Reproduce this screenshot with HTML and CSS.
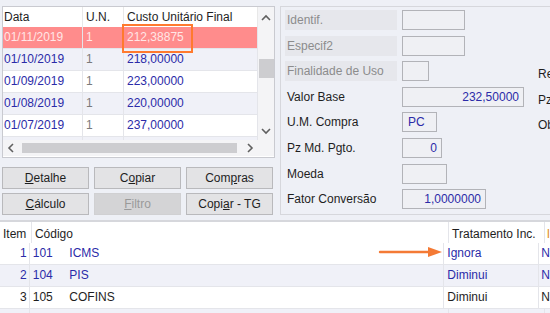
FILE: index.html
```html
<!DOCTYPE html>
<html lang="pt-BR">
<head>
    <meta charset="UTF-8">
    <title>Custos</title>
    <link rel="stylesheet" href="styles.css">
</head>
<body>
<div class="screen">
    <div class="top">
        <div class="left">
            <div class="grid-box">
                <div class="grid-main">
                    <div class="grid-body">
                        <div class="row head">
                            <span class="c-data">Data</span>
                            <span class="c-un">U.N.</span>
                            <span class="c-custo">Custo Unitário Final</span>
                        </div>
                        <div class="row sel">
                            <span class="c-data">01/11/2019</span>
                            <span class="c-un">1</span>
                            <span class="c-custo">212,38875</span>
                        </div>
                        <div class="row alt">
                            <span class="c-data">01/10/2019</span>
                            <span class="c-un">1</span>
                            <span class="c-custo">218,00000</span>
                        </div>
                        <div class="row">
                            <span class="c-data">01/09/2019</span>
                            <span class="c-un">1</span>
                            <span class="c-custo">223,00000</span>
                        </div>
                        <div class="row alt">
                            <span class="c-data">01/08/2019</span>
                            <span class="c-un">1</span>
                            <span class="c-custo">220,00000</span>
                        </div>
                        <div class="row">
                            <span class="c-data">01/07/2019</span>
                            <span class="c-un">1</span>
                            <span class="c-custo">237,00000</span>
                        </div>
                        <div class="row alt">
                            <span class="c-data"></span>
                            <span class="c-un"></span>
                            <span class="c-custo"></span>
                        </div>
                    </div>
                    <div class="vscroll">
                        <svg class="arrow-up" width="10" height="7" viewBox="0 0 10 7"><path d="M1 6 L5 2 L9 6" fill="none" stroke="#606060" stroke-width="1.6"/></svg>
                        <div class="vthumb"></div>
                        <svg class="arrow-down" width="10" height="7" viewBox="0 0 10 7"><path d="M1 1 L5 5 L9 1" fill="none" stroke="#606060" stroke-width="1.6"/></svg>
                    </div>
                </div>
                <div class="hscroll">
                    <svg width="7" height="10" viewBox="0 0 7 10"><path d="M6 1 L2 5 L6 9" fill="none" stroke="#606060" stroke-width="1.6"/></svg>
                    <div class="hthumb"></div>
                    <svg width="7" height="10" viewBox="0 0 7 10"><path d="M1 1 L5 5 L1 9" fill="none" stroke="#606060" stroke-width="1.6"/></svg>
                    <div class="corner"></div>
                </div>
            </div>
            <div class="buttons">
                <button><u>D</u>etalhe</button>
                <button>C<u>o</u>piar</button>
                <button>Com<u>p</u>ras</button>
                <button><u>C</u>álculo</button>
                <button class="disabled"><u>F</u>iltro</button>
                <button>Copi<u>a</u>r - TG</button>
            </div>
        </div>
        <div class="panel">
            <div class="fields">
                <span class="label off">Identif.</span>
                <span class="box w-63"></span>
                <span></span>

                <span class="label off">Especif2</span>
                <span class="box w-63"></span>
                <span></span>

                <span class="label off">Finalidade de Uso</span>
                <span class="box w-27"></span>
                <span class="side">Re</span>

                <span class="label">Valor Base</span>
                <span class="box w-122 num">232,50000</span>
                <span class="side">Pz</span>

                <span class="label">U.M. Compra</span>
                <span class="box w-35 txt">PC</span>
                <span class="side">Ob</span>

                <span class="label">Pz Md. Pgto.</span>
                <span class="box w-40 num">0</span>
                <span></span>

                <span class="label">Moeda</span>
                <span class="box w-45"></span>
                <span></span>

                <span class="label">Fator Conversão</span>
                <span class="box w-84 num">1,0000000</span>
                <span></span>
            </div>
        </div>
    </div>
    <div class="bottom">
        <div class="brow bhead">
            <span class="b-item">Item</span>
            <span class="b-cod">Código</span>
            <span class="b-desc"></span>
            <span class="b-trat">Tratamento Inc.</span>
            <span class="b-next orange">I</span>
        </div>
        <div class="brow blue">
            <span class="b-item">1</span>
            <span class="b-cod">101</span>
            <span class="b-desc">ICMS</span>
            <span class="b-trat">Ignora</span>
            <span class="b-next">N</span>
        </div>
        <div class="brow alt blue">
            <span class="b-item">2</span>
            <span class="b-cod">104</span>
            <span class="b-desc">PIS</span>
            <span class="b-trat">Diminui</span>
            <span class="b-next">N</span>
        </div>
        <div class="brow">
            <span class="b-item">3</span>
            <span class="b-cod">105</span>
            <span class="b-desc">COFINS</span>
            <span class="b-trat">Diminui</span>
            <span class="b-next">N</span>
        </div>
        <div class="brow alt">
            <span class="b-item"></span>
            <span class="b-cod"></span>
            <span class="b-desc"></span>
            <span class="b-trat"></span>
            <span class="b-next"></span>
        </div>
    </div>

    <div class="mark"></div>
    <svg class="pointer" width="70" height="14" viewBox="0 0 70 14">
        <path d="M2 7 L54 7" stroke="#f47a35" stroke-width="2.4" stroke-linecap="round"/>
        <path d="M50 2 L64 7 L50 12 Z" fill="#f47a35"/>
    </svg>
</div>
</body>
</html>
```

FILE: styles.css
```css
body {
    margin: 0;
    font-family: "Liberation Sans", Arial, sans-serif;
    font-size: 12px;
    color: #1e1e1e;
    background: #eef0f6;
}
.screen {
    position: relative;
    width: 550px;
    height: 313px;
    overflow: hidden;
}
.top {
    display: flex;
    padding-top: 6px;
    height: 209px;
}
.left {
    width: 273px;
    margin-left: 2px;
    flex-shrink: 0;
}

/* upper grid */
.grid-box {
    border: 1px solid #c9cad0;
    background: #ffffff;
    height: 150px;
    display: flex;
    flex-direction: column;
}
.grid-main {
    display: flex;
    height: 133px;
}
.grid-body {
    flex: 1;
    overflow: hidden;
}
.row {
    display: flex;
    height: 21px;
    line-height: 21px;
    border-bottom: 1px solid #e4e5ea;
    color: #2b2ba8;
}
.row span {
    padding-left: 1px;
    border-right: 1px solid #e4e5ea;
    white-space: nowrap;
}
.row.head {
    color: #1e1e1e;
    height: 20px;
    line-height: 20px;
    border-bottom: none;
}
.row.head span {
    border-right-color: #e8e8e8;
}
.row.alt {
    background: #f0f1f8;
}
.row.sel {
    background: #ff8c8c;
    color: #ffe6e6;
}
.c-data {
    width: 78px;
}
.c-un {
    width: 37px;
    padding-left: 3px !important;
    color: #7a7a7a;
}
.row.head .c-un {
    color: #1e1e1e;
}
.row.sel .c-un {
    color: #ffe6e6;
}
.c-custo {
    flex: 1;
    padding-left: 3px !important;
}
.vscroll {
    width: 16px;
    background: #f4f4f6;
    display: flex;
    flex-direction: column;
    align-items: center;
}
.arrow-up {
    margin-top: 7px;
}
.vthumb {
    width: 15px;
    height: 19px;
    background: #cdcdd0;
    margin-top: 38px;
}
.arrow-down {
    margin-top: auto;
    margin-bottom: 5px;
}
.hscroll {
    height: 16px;
    background: #f4f4f6;
    display: flex;
    align-items: center;
    padding-left: 4px;
}
.hthumb {
    width: 215px;
    height: 10px;
    background: #cdcdd0;
    margin: 0 10px 0 8px;
}
.corner {
    flex: 1;
}

/* buttons */
.buttons {
    display: grid;
    grid-template-columns: 87px 87px 87px;
    column-gap: 5px;
    row-gap: 4px;
    margin-top: 9px;
}
button {
    height: 22px;
    padding: 0;
    font-family: "Liberation Sans", Arial, sans-serif;
    font-size: 12px;
    color: #1e1e1e;
    background: #e3e3e5;
    border: 1px solid #b9b9bc;
}
button.disabled {
    background: #d4d4d6;
    border-color: #d0d0d2;
    color: #9a9a9a;
}

/* right panel */
.panel {
    flex: 1;
    margin-left: 5px;
    border: 1px solid #d6d7dc;
    border-right: none;
    padding: 3px 0 0 4px;
}
.fields {
    display: grid;
    grid-template-columns: 112px 131px 30px;
    column-gap: 5px;
    grid-auto-rows: 20px;
    row-gap: 5.6px;
}
.label {
    line-height: 20px;
    padding-left: 2px;
    white-space: nowrap;
}
.label.off {
    background: #e6e7ec;
    color: #8c8c8c;
}
.box {
    box-sizing: border-box;
    height: 20px;
    line-height: 18px;
    border: 1px solid #b2b3b8;
    background: #eff0f4;
    color: #2b2ba8;
}
.box.num {
    text-align: right;
    padding-right: 4px;
}
.box.txt {
    padding-left: 5px;
}
.w-63 { width: 63px; }
.w-27 { width: 27px; }
.w-122 { width: 122px; }
.w-35 { width: 35px; }
.w-40 { width: 40px; }
.w-45 { width: 45px; }
.w-84 { width: 84px; }
.side {
    line-height: 20px;
    padding-top: 3px;
    white-space: nowrap;
}

/* lower grid */
.bottom {
    margin-top: 5px;
    border-top: 2px solid #d6d7dc;
    background: #ffffff;
    height: 100px;
}
.brow {
    display: flex;
    height: 21px;
    line-height: 21px;
    border-bottom: 1px solid #e4e5ea;
    white-space: nowrap;
}
.brow.bhead {
    height: 21px;
    line-height: 25px;
    border-bottom: none;
}
.brow.alt {
    background: #f0f1f8;
}
.brow.blue {
    color: #2b2ba8;
}
.b-item {
    width: 27px;
    text-align: right;
    padding-right: 2px;
    border-right: 1px solid #e4e5ea;
}
.bhead .b-item {
    text-align: left;
    padding-left: 3px;
    width: 26px;
}
.b-cod {
    width: 37px;
    padding-left: 3px;
}
.b-desc {
    width: 378px;
    border-right: 1px solid #e4e5ea;
}
.b-trat {
    width: 92px;
    padding-left: 3px;
    border-right: 1px solid #e4e5ea;
}
.b-next {
    padding-left: 2px;
    color: #2b2ba8;
}
.brow:not(.blue) .b-next {
    color: #1e1e1e;
}
.b-next.orange {
    color: #e0902a !important;
}

/* overlays */
.mark {
    position: absolute;
    left: 122px;
    top: 24px;
    width: 67px;
    height: 25px;
    border: 2px solid #ff7a2e;
}
.pointer {
    position: absolute;
    left: 378px;
    top: 245px;
}
```
